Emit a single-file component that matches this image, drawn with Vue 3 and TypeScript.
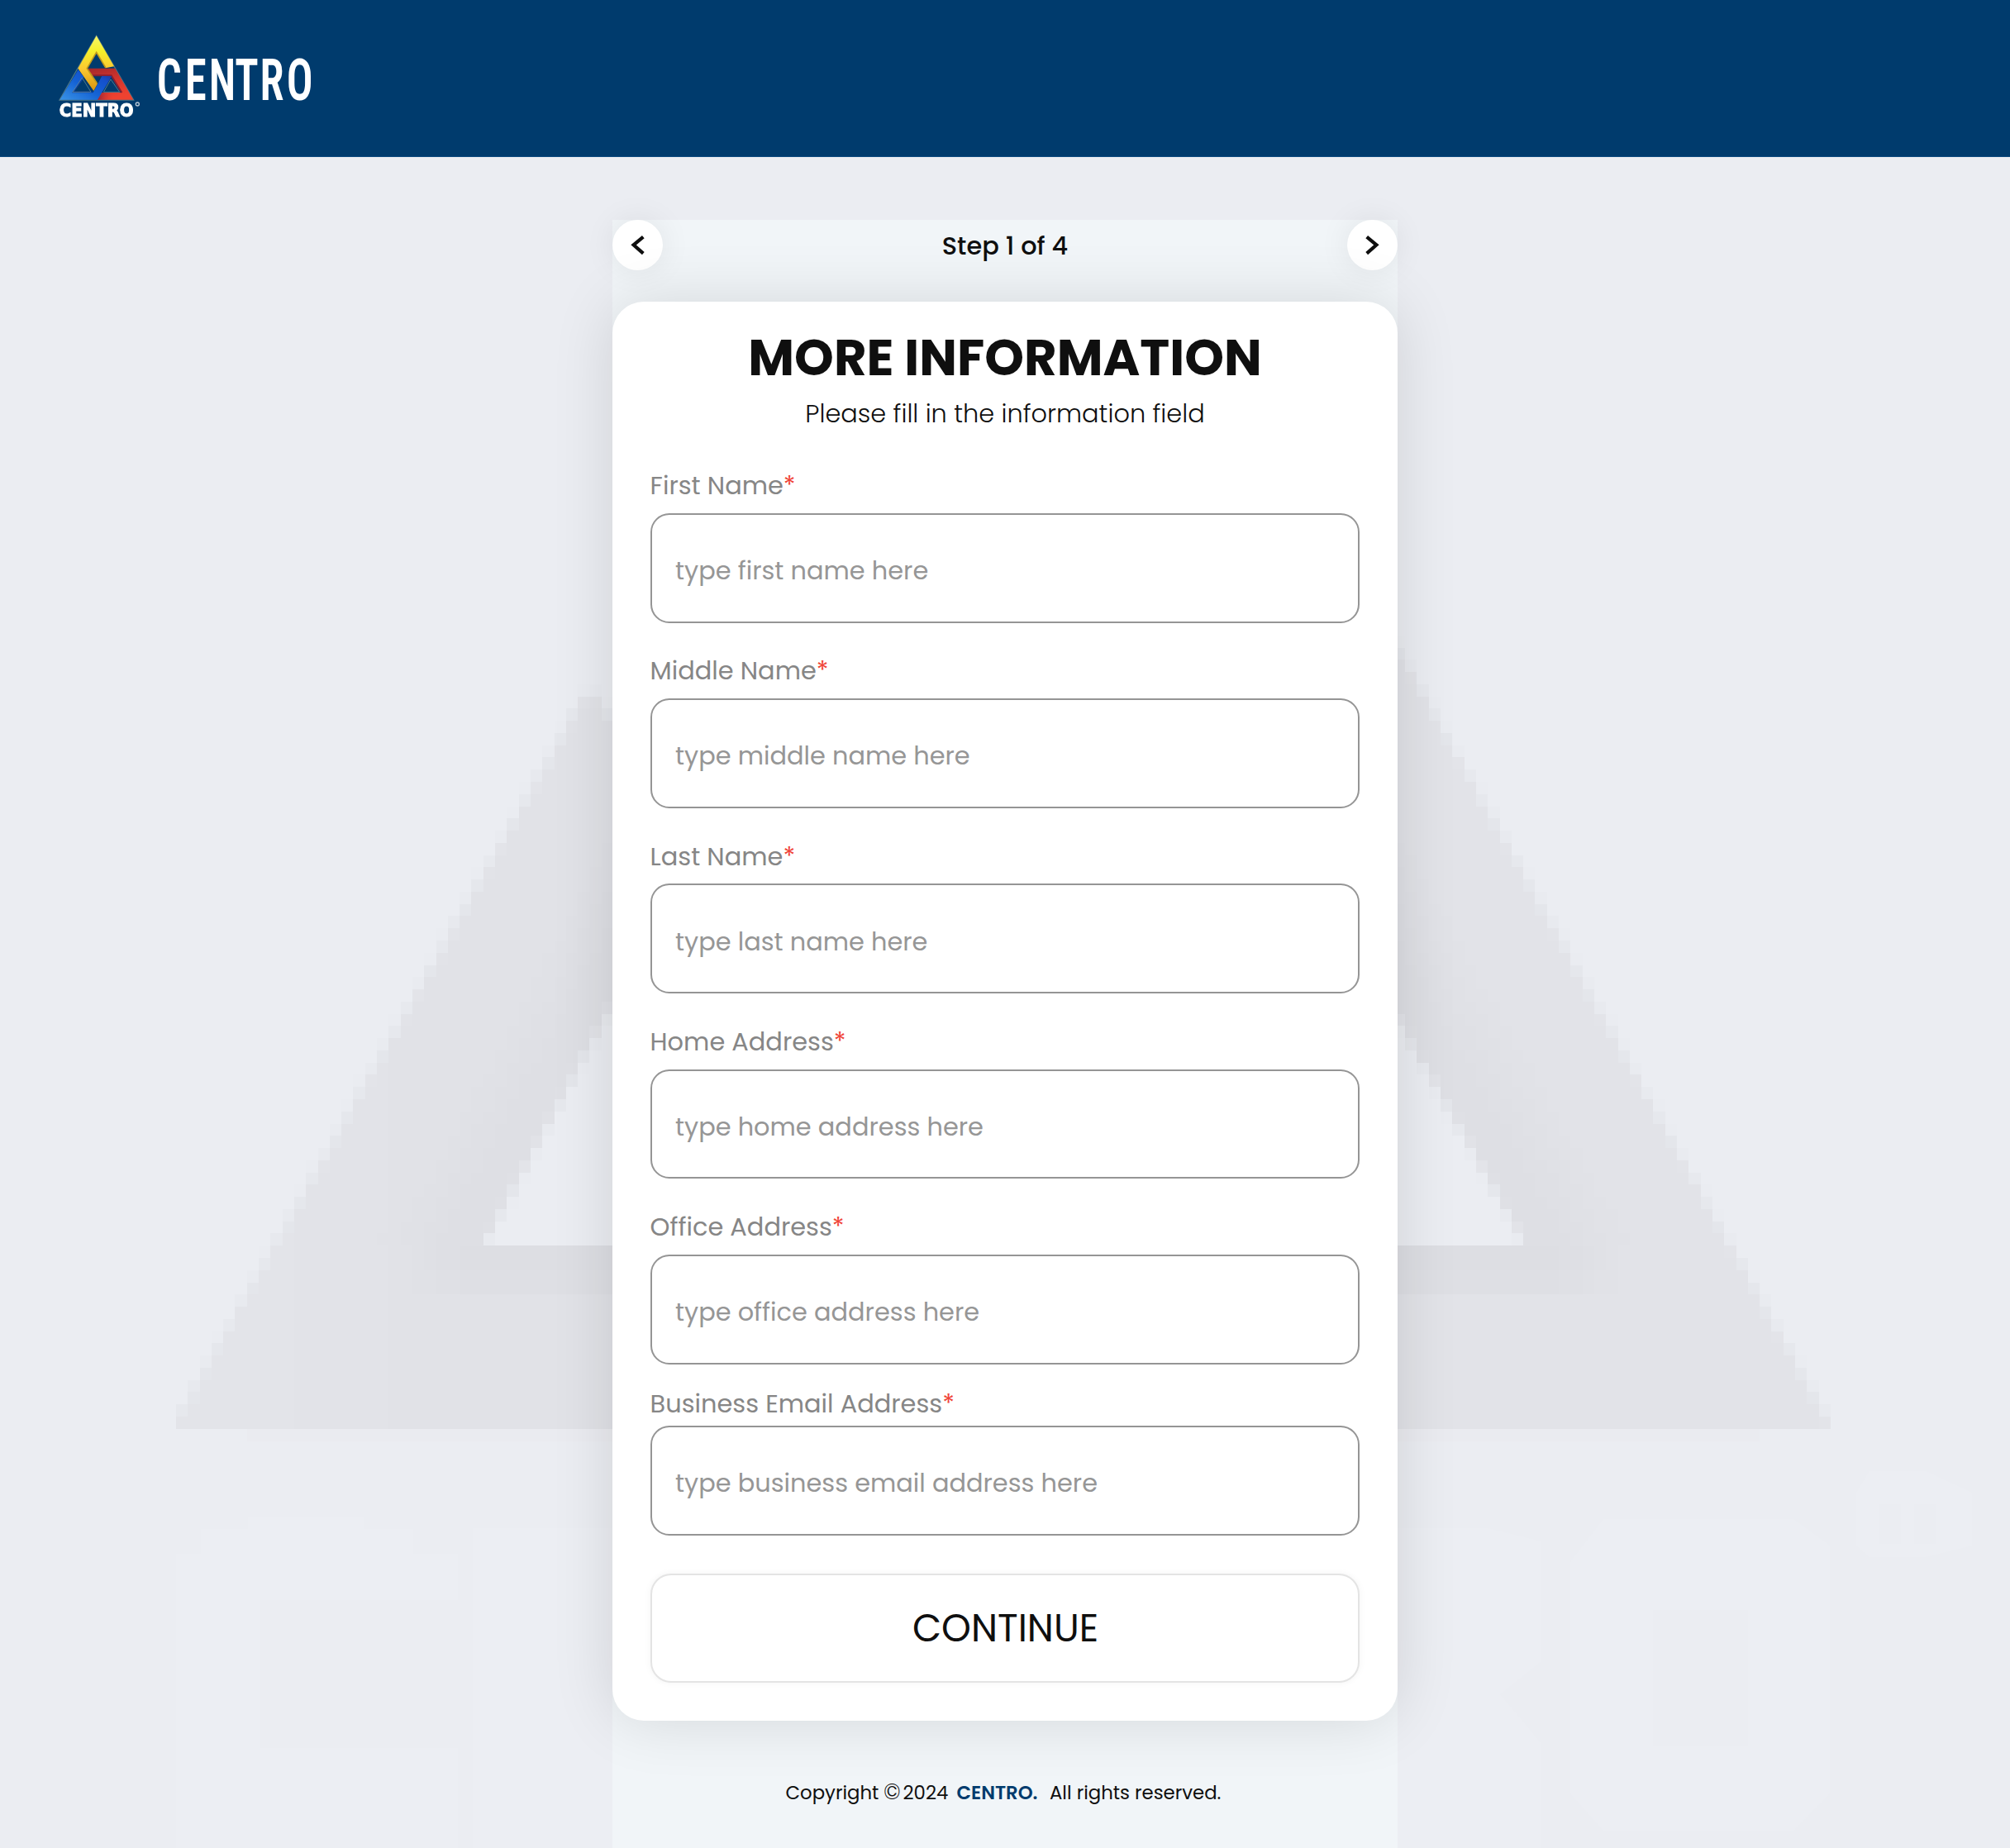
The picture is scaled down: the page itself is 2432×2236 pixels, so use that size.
<script setup lang="ts">
interface Field {
  id: string
  label: string
  hint: string
}

const fields: Field[] = [
  { id: 'first', label: 'First Name', hint: 'type first name here' },
  { id: 'middle', label: 'Middle Name', hint: 'type middle name here' },
  { id: 'last', label: 'Last Name', hint: 'type last name here' },
  { id: 'home', label: 'Home Address', hint: 'type home address here' },
  { id: 'office', label: 'Office Address', hint: 'type office address here' },
  { id: 'email', label: 'Business Email Address', hint: 'type business email address here' },
]

// The watermark is a coarse mosaic of the brand triangle: every cell is shaded by its coverage.
const CELL_W = 14.3
const CELL_H = 14.77
const ORIGIN_X = 212.9
const ORIGIN_Y = 1728.8

interface Run { x: number; y: number; w: number; fill: string }

function clamp(v: number): number {
  return Math.min(1, Math.max(0, v))
}

function shade(x: number, y: number): number {
  if (y > 1728.8) return 0
  const left = 213 + (1716 - y) * 0.5635
  const right = 2214.8 - (1723 - y) * 0.557
  if (x < left || x > right || y < 740) return 0
  if (x < 1100 && y < 838 + Math.max(0, x - 722) * 1.8) return 0
  const innerLeft = 584.6 + (1507.7 - y) * 0.535
  const innerRight = 1846 - (1507.7 - y) * 0.565
  if (y < 1507.7 && x > innerLeft && x < innerRight) return 0
  const base = x < 1216 ? 0.5 + 0.14 * clamp((x - 230) / 250) : 0.62
  if (y >= 1507.7) {
    if (y >= 1568) return base
    const peak = y < 1538 ? 0.96 : 0.86
    const reach = x < 1216 ? clamp((x - 480) / 90) : clamp((1965 - x) / 90)
    return base + (peak - base) * reach
  }
  const distance = x < 1216 ? innerLeft - x : x - innerRight
  return base + (0.88 - base) * clamp((130 - distance) / 90)
}

function mix(t: number): string {
  const c = (a: number, b: number) => Math.round(a + (b - a) * t)
  return `rgb(${c(235, 220)},${c(237, 221)},${c(242, 226)})`
}

const mosaic: Run[] = []
for (let row = -68; row < 0; row++) {
  const y = ORIGIN_Y + row * CELL_H
  let open: Run | null = null
  for (let col = 0; col < 140; col++) {
    const x = ORIGIN_X + col * CELL_W
    let sum = 0
    for (let i = 0; i < 4; i++) {
      for (let j = 0; j < 4; j++) {
        sum += shade(x + ((i + 0.5) * CELL_W) / 4, y + ((j + 0.5) * CELL_H) / 4)
      }
    }
    const t = Math.round((sum / 16) * 15) / 15
    if (t === 0) {
      open = null
      continue
    }
    const fill = mix(t)
    if (open && open.fill === fill) {
      open.w += CELL_W
    } else {
      open = { x, y, w: CELL_W, fill }
      mosaic.push(open)
    }
  }
}
</script>

<template>
  <div class="page">
    <svg class="watermark" viewBox="0 0 2432 2236" aria-hidden="true">
      <g shape-rendering="crispEdges">
        <rect v-for="(r, i) in mosaic" :key="i" :x="r.x" :y="r.y" :width="r.w" :height="CELL_H" :fill="r.fill" />
        <rect x="299" y="1728.8" width="1830" height="14.8" fill="#eaebf0" />
      </g>
      <g fill="#eceef3">
        <path d="M213 2236V1880H243V1850H300V1835H440V1850H500V1880H554V1936H314V2115H554V2236Z" />
        <path d="M572 1849H900V2236H572Z" />
        <path d="M1600 1849H1800L1865 1865V2010L1815 2050L1865 2110V2236H1600Z" />
        <path fill-rule="evenodd" d="M1900 2170V1890L1940 1838H2170L2214 1870V2170L2170 2215H1940ZM2000 1948V2112H2115V1948Z" />
        <path fill-rule="evenodd" d="M2246 1870V1806L2262 1780H2330L2386 1806V1870L2330 1884H2262ZM2273 1868H2300V1820H2273ZM2316 1868H2342V1820H2316Z" />
      </g>
    </svg>

    <header class="topbar">
      <svg class="emblem" viewBox="0 0 360 360" role="img" aria-label="Centro emblem">
        <defs>
          <linearGradient id="gold" x1="0" y1="0" x2="0" y2="1">
            <stop offset="0" stop-color="#f6f56a" />
            <stop offset="0.28" stop-color="#f6f02a" />
            <stop offset="0.6" stop-color="#fbc831" />
            <stop offset="1" stop-color="#d8940f" />
          </linearGradient>
          <linearGradient id="blue" x1="0" y1="1" x2="1" y2="0">
            <stop offset="0" stop-color="#3a94e6" />
            <stop offset="0.45" stop-color="#1462d4" />
            <stop offset="0.75" stop-color="#1450cc" />
            <stop offset="1" stop-color="#2b2a7c" />
          </linearGradient>
          <linearGradient id="red" x1="0" y1="0" x2="0.35" y2="1">
            <stop offset="0" stop-color="#a3282c" />
            <stop offset="0.45" stop-color="#cf332c" />
            <stop offset="1" stop-color="#ee4230" />
          </linearGradient>
          <linearGradient id="redfoot" x1="0" y1="0" x2="1" y2="0">
            <stop offset="0" stop-color="#8e2238" />
            <stop offset="0.6" stop-color="#dc3a2e" stop-opacity="0" />
          </linearGradient>
        </defs>
        <g class="soft">
          <path d="M170 40L305 273H36Z" fill="none" stroke="#8aa79a" stroke-opacity="0.55" stroke-width="4" />
          <path d="M140 158H238L304 272H172L188 246H264L226 186H150Z" fill="url(#red)" />
          <path d="M172 272L188 246H264L270 272Z" fill="url(#redfoot)" />
          <path d="M143 184H224L262 246" fill="none" stroke="#8a2030" stroke-width="6" />
          <path d="M104 163L124 190L84 246H158L190 186H226L174 272H37Z" fill="url(#blue)" />
          <path d="M122 194L86 244H158" fill="none" stroke="#0b3f9c" stroke-width="5" />
          <path d="M170 40L234 151L203 157L170 100L136 158L174 214L160 240L103 158Z" fill="url(#gold)" />
          <path d="M203 155L170 100L136 158L172 212" fill="none" stroke="#c09a1c" stroke-width="5" />
          <path d="M84 244L118 192L150 244ZM196 244L222 198L254 244Z" fill="none" stroke="#5f8494" stroke-width="2.5" />
          <text x="35" y="333" textLength="270" lengthAdjust="spacingAndGlyphs" class="emblem-word">CENTRO</text>
        </g>
        <circle cx="319" cy="288" r="6" fill="none" stroke="#b9c8d6" stroke-width="4" />
      </svg>
      <svg class="brand" viewBox="0 0 220 110" role="img" aria-label="Centro">
        <text transform="scale(0.75 1)" x="5 50.5 89 131 171.5 214.5" y="80">CENTRO</text>
      </svg>
    </header>

    <main class="panel">
      <nav class="steps">
        <button class="round" type="button" aria-label="Previous step">
          <svg viewBox="0 0 61 61"><path d="M37.3 20.6L25.6 30.4L37.3 40.6" /></svg>
        </button>
        <span class="step-text">Step 1 of 4</span>
        <button class="round" type="button" aria-label="Next step">
          <svg viewBox="0 0 61 61"><path d="M23.7 20.6L35.4 30.4L23.7 40.6" /></svg>
        </button>
      </nav>

      <form class="card" @submit.prevent>
        <h1>MORE INFORMATION</h1>
        <p class="lead">Please fill in the information field</p>
        <div v-for="f in fields" :key="f.id" class="field" :class="{ tight: f.id === 'email' }">
          <label :for="f.id">{{ f.label }}<i>*</i></label>
          <input :id="f.id" type="text" :placeholder="f.hint" />
        </div>
        <button class="continue" type="submit">CONTINUE</button>
      </form>

      <footer class="copyright">
        <span>Copyright</span>
        <span class="mark">©</span>
        <span>2024</span>
        <strong>CENTRO.</strong>
        <span>All rights reserved.</span>
      </footer>
    </main>
  </div>
</template>

<style>
html,
body {
  margin: 0;
  background: #ebedf2;
}
</style>

<style scoped>
.page {
  position: relative;
  box-sizing: border-box;
  width: 2432px;
  height: 2236px;
  overflow: hidden;
  display: flex;
  flex-direction: column;
  align-items: center;
  background: #ebedf2;
  color: #0f0f0f;
  font-family: Poppins, Inter, sans-serif;
}
.watermark {
  position: absolute;
  inset: 0;
  width: 2432px;
  height: 2236px;
}
.topbar {
  position: relative;
  flex: none;
  box-sizing: border-box;
  width: 100%;
  height: 190px;
  padding: 30px 0 0 60px;
  display: flex;
  background: #003b6d;
  border-bottom: 1px solid #0c4a80;
}
.emblem {
  width: 120px;
  height: 120px;
}
.soft {
  filter: blur(1.3px);
}
.emblem-word {
  font: 700 63px 'DejaVu Sans', sans-serif;
  fill: #fff;
  stroke: #fff;
  stroke-width: 3;
}
.brand {
  width: 220px;
  height: 110px;
  margin: 11px 0 0 6px;
}
.brand text {
  font: 600 70.5px 'Roboto Condensed', Roboto, sans-serif;
  fill: #fff;
}
.panel {
  position: relative;
  flex: none;
  width: 950px;
  height: 1970px;
  margin-top: 76px;
  background: #f1f5f8;
}
.steps {
  display: flex;
  justify-content: space-between;
  align-items: center;
  height: 61px;
}
.round {
  width: 61px;
  height: 61px;
  padding: 0;
  border: 0;
  border-radius: 50%;
  background: #fff;
  box-shadow: 0 0 38px rgba(0, 0, 0, 0.08);
}
.round svg {
  display: block;
  width: 61px;
  height: 61px;
}
.round path {
  fill: none;
  stroke: #0f0f0f;
  stroke-width: 4.2;
}
.step-text {
  font-size: 30.4px;
  font-weight: 500;
  line-height: 38px;
  padding-top: 2px;
}
.card {
  position: relative;
  box-sizing: border-box;
  height: 1717.5px;
  margin-top: 37.5px;
  padding: 33.3px 45.6px 0;
  border-radius: 38px;
  background: #fff;
  box-shadow: 0 0 76px rgba(0, 0, 0, 0.12);
}
h1 {
  margin: 0;
  font-size: 60.8px;
  font-weight: 700;
  line-height: 70px;
  text-align: center;
  white-space: nowrap;
}
.lead {
  margin: 14.3px 0 49.1px;
  font-size: 30.4px;
  font-weight: 300;
  line-height: 38px;
  text-align: center;
}
.field {
  margin-bottom: 39.5px;
}
.field label {
  display: block;
  height: 38px;
  margin-bottom: 13.8px;
  line-height: 38.6px;
  font-size: 30.4px;
  color: #868686;
  white-space: nowrap;
}
.field label i {
  font-style: normal;
  color: #f04438;
}
.field.tight {
  margin-top: -9.7px;
  margin-bottom: 46px;
}
.field.tight label {
  margin-bottom: 6.6px;
}
.field input {
  display: block;
  box-sizing: border-box;
  width: 858.8px;
  height: 132.9px;
  padding: 7.5px 28.4px 0;
  border: 2px solid #959595;
  border-radius: 22.8px;
  background: #fff;
  font: inherit;
  font-size: 30.4px;
  outline: none;
}
.field input::placeholder {
  color: #969696;
  opacity: 1;
}
.continue {
  display: block;
  box-sizing: border-box;
  width: 858.8px;
  height: 132px;
  padding: 2px 0 0 1px;
  border: 2px solid #e4e4e4;
  border-radius: 25px;
  background: #fff;
  box-shadow: 0 0 8px rgba(0, 0, 0, 0.05);
  color: #0f0f0f;
  font: inherit;
  font-size: 45.6px;
}
.copyright {
  position: relative;
  display: grid;
  grid-template-columns: 118.5px 23.5px 65px 112.5px auto;
  align-items: baseline;
  height: 30px;
  margin-top: 71px;
  padding-left: 209.5px;
  font-size: 22.8px;
  line-height: 30px;
  white-space: nowrap;
}
.mark {
  font-size: 26px;
  font-weight: 300;
}
.copyright strong {
  font-weight: 600;
  color: #003b6d;
}
</style>
